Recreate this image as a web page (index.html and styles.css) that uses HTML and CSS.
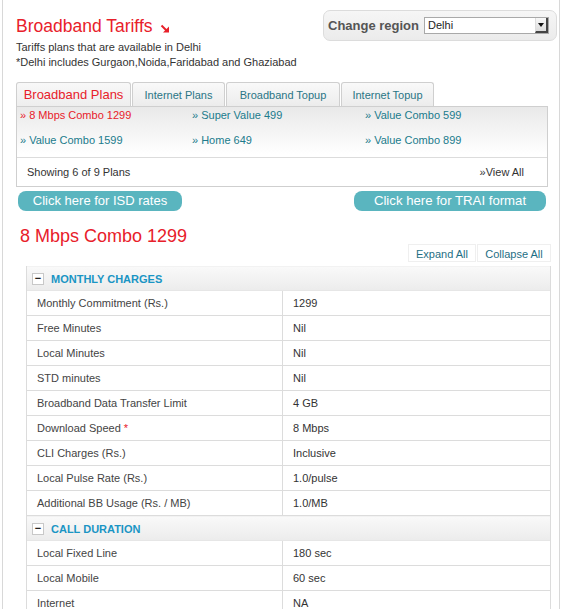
FILE: index.html
```html
<!DOCTYPE html>
<html>
<head>
<meta charset="utf-8">
<link rel="stylesheet" href="styles.css">
</head>
<body>
<div class="page">
  <div class="header">
    <div class="intro">
      <h1 class="title">Broadband Tariffs <svg class="arrow" width="10" height="9" viewBox="0 0 10 9"><path d="M1.5 1.5 L7 7" stroke="#e8202a" stroke-width="2" fill="none"/><path d="M3 8.5 L9 8.5 L9 2.5 Z" fill="#e8202a"/></svg></h1>
      <p class="desc">Tariffs plans that are available in Delhi</p>
      <p class="desc">*Delhi includes Gurgaon,Noida,Faridabad and Ghaziabad</p>
    </div>
    <div class="region">
      <span class="region-label">Change region</span>
      <div class="select"><span class="select-value">Delhi</span><span class="select-btn"><span class="tri"></span></span></div>
    </div>
  </div>

  <div class="tabs">
    <div class="tab active">Broadband Plans</div>
    <div class="tab t2">Internet Plans</div>
    <div class="tab t3">Broadband Topup</div>
    <div class="tab t4">Internet Topup</div>
  </div>
  <div class="panel">
    <div class="plans">
      <a class="plan current">» 8 Mbps Combo 1299</a>
      <a class="plan">» Super Value 499</a>
      <a class="plan">» Value Combo 599</a>
      <a class="plan">» Value Combo 1599</a>
      <a class="plan">» Home 649</a>
      <a class="plan">» Value Combo 899</a>
    </div>
    <div class="panel-foot">
      <span>Showing 6 of 9 Plans</span>
      <a class="viewall">»View All</a>
    </div>
  </div>

  <div class="buttons">
    <a class="pill isd">Click here for ISD rates</a>
    <a class="pill trai">Click here for TRAI format</a>
  </div>

  <h2 class="plan-title">8 Mbps Combo 1299</h2>
  <div class="toggles">
    <a class="toggle expand">Expand All</a>
    <a class="toggle collapse">Collapse All</a>
  </div>

  <div class="table">
    <div class="section"><span class="minus">−</span><span class="section-name">MONTHLY CHARGES</span></div>
    <div class="row"><div class="cell label">Monthly Commitment (Rs.)</div><div class="cell value">1299</div></div>
    <div class="row"><div class="cell label">Free Minutes</div><div class="cell value">Nil</div></div>
    <div class="row"><div class="cell label">Local Minutes</div><div class="cell value">Nil</div></div>
    <div class="row"><div class="cell label">STD minutes</div><div class="cell value">Nil</div></div>
    <div class="row"><div class="cell label">Broadband Data Transfer Limit</div><div class="cell value">4 GB</div></div>
    <div class="row"><div class="cell label">Download Speed <span class="star">*</span></div><div class="cell value">8 Mbps</div></div>
    <div class="row"><div class="cell label">CLI Charges (Rs.)</div><div class="cell value">Inclusive</div></div>
    <div class="row"><div class="cell label">Local Pulse Rate (Rs.)</div><div class="cell value">1.0/pulse</div></div>
    <div class="row"><div class="cell label">Additional BB Usage (Rs. / MB)</div><div class="cell value">1.0/MB</div></div>
    <div class="section"><span class="minus">−</span><span class="section-name">CALL DURATION</span></div>
    <div class="row"><div class="cell label">Local Fixed Line</div><div class="cell value">180 sec</div></div>
    <div class="row"><div class="cell label">Local Mobile</div><div class="cell value">60 sec</div></div>
    <div class="row"><div class="cell label">Internet</div><div class="cell value">NA</div></div>
  </div>
</div>
</body>
</html>
```
FILE: styles.css
```css
html, body {
  margin: 0;
  padding: 0;
  background: #fff;
}
body {
  font-family: "Liberation Sans", Arial, sans-serif;
  font-size: 11px;
  color: #333;
}
.page {
  margin-left: 2px;
  min-height: 640px;
  border-left: 1px solid #d8d8d8;
  border-right: 1px solid #d8d8d8;
  padding: 0 0 0 13px;
  box-sizing: content-box;
  width: 543px;
}
.header {
  display: flex;
  justify-content: space-between;
  align-items: flex-start;
}
.intro {
  padding-top: 15px;
}
.title {
  margin: 0;
  font-size: 17.5px;
  line-height: 22px;
  font-weight: normal;
  color: #e8202a;
}
.arrow {
  display: inline-block;
  vertical-align: -1px;
  margin-left: 3px;
}
.desc {
  margin: 0;
  line-height: 15px;
  color: #333;
}
.title + .desc {
  margin-top: 3px;
}
.region {
  margin-top: 10px;
  margin-right: 2px;
  width: 234px;
  height: 31px;
  box-sizing: border-box;
  border: 1px solid #dcdcdc;
  border-radius: 7px;
  background: linear-gradient(#f6f6f6, #ebebeb);
  display: flex;
  align-items: center;
  padding-left: 4px;
}
.region-label {
  font-size: 13px;
  font-weight: bold;
  color: #555;
}
.select {
  margin-left: 5px;
  width: 125px;
  height: 17px;
  box-sizing: border-box;
  border: 1px solid #a9a9a9;
  background: #fff;
  display: flex;
  align-items: stretch;
  justify-content: space-between;
}
.select-value {
  padding-left: 3px;
  line-height: 14px;
  color: #222;
}
.select-btn {
  width: 13px;
  background: linear-gradient(#f8f8f8, #dcdcdc);
  border-left: 1px solid #ddd;
  border-right: 2px solid #444;
  border-bottom: 2px solid #444;
  box-sizing: border-box;
  display: flex;
  align-items: center;
  justify-content: center;
}
.tri {
  width: 0;
  height: 0;
  border-left: 3px solid transparent;
  border-right: 3px solid transparent;
  border-top: 4px solid #111;
}
.tabs {
  margin-top: 12px;
  display: flex;
  height: 24px;
}
.tab {
  height: 24px;
  box-sizing: border-box;
  border: 1px solid #cfcfcf;
  border-bottom: none;
  border-radius: 3px 3px 0 0;
  background: linear-gradient(#f9f9f9, #ececec);
  color: #2a7585;
  text-align: center;
  line-height: 24px;
  margin-right: 1px;
}
.tab.active {
  width: 115px;
  font-size: 13px;
  color: #e8202a;
  background: linear-gradient(#f8f8f8, #eeeeee);
}
.tab.t2 { width: 93px; }
.tab.t3 { width: 114px; }
.tab.t4 { width: 93px; }
.panel {
  width: 532px;
  box-sizing: border-box;
  border: 1px solid #cfcfcf;
}
.plans {
  display: grid;
  grid-template-columns: 172px 173px 1fr;
  row-gap: 10px;
  padding: 1px 0 9px 3px;
  background: linear-gradient(#e9e9e9, #ffffff 95%);
}
.plan {
  line-height: 15px;
  color: #207b8c;
  text-decoration: none;
}
.plan.current {
  color: #e8202a;
}
.panel-foot {
  border-top: 1px solid #dcdcdc;
  height: 28px;
  line-height: 28px;
  display: flex;
  justify-content: space-between;
  padding: 0 23px 0 10px;
  color: #333;
}
.viewall {
  color: #333;
}
.buttons {
  margin-top: 4px;
  display: flex;
  justify-content: space-between;
  width: 528px;
  padding-left: 2px;
}
.pill {
  height: 20px;
  line-height: 20px;
  border-radius: 8px;
  background: #5ab5bf;
  color: #fff;
  font-size: 13px;
  text-align: center;
  box-sizing: border-box;
}
.pill.isd { width: 164px; }
.pill.trai { width: 192px; font-size: 13.2px; }
.plan-title {
  margin: 16px 0 0 4px;
  font-size: 18px;
  line-height: 18px;
  font-weight: normal;
  color: #e8202a;
}
.toggles {
  display: flex;
  justify-content: flex-end;
  margin: -1px 8px 0 0;
  height: 18px;
}
.toggle {
  height: 18px;
  line-height: 18px;
  box-sizing: border-box;
  border: 1px solid #efefef;
  color: #1f6f85;
  text-align: center;
}
.toggle.expand { width: 68px; margin-right: 1px; }
.toggle.collapse { width: 74px; }
.table {
  margin: 4px 0 0 10px;
  width: 525px;
  border-left: 1px solid #dcdcdc;
  border-right: 1px solid #dcdcdc;
  box-sizing: border-box;
}
.section {
  height: 25px;
  box-sizing: border-box;
  border-top: 1px solid #f2f2f2;
  border-bottom: 1px solid #e6e6e6;
  background: linear-gradient(#f9f9f9, #ececec);
  display: flex;
  align-items: center;
  padding-left: 5px;
}
.minus {
  width: 12px;
  height: 12px;
  box-sizing: border-box;
  border: 1px solid #c8c8c8;
  background: #fff;
  color: #222;
  font-size: 11px;
  line-height: 9px;
  text-align: center;
  font-weight: bold;
}
.section-name {
  margin-left: 7px;
  font-weight: bold;
  color: #1a95c4;
}
.row {
  display: grid;
  grid-template-columns: 256px 1fr;
  height: 25px;
  box-sizing: border-box;
  border-bottom: 1px solid #dcdcdc;
}
.cell {
  line-height: 24px;
  padding-left: 10px;
}
.label {
  color: #444;
  border-right: 1px solid #dcdcdc;
}
.value {
  color: #333;
}
.star {
  color: #e8202a;
}
```
